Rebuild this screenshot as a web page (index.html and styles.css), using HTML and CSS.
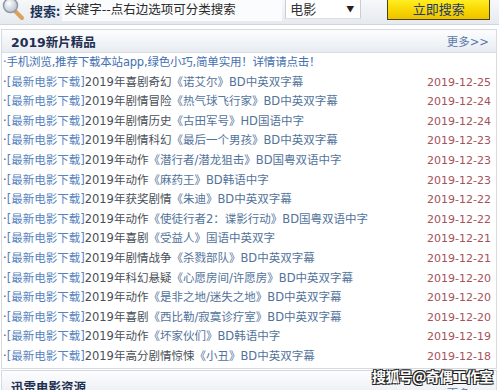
FILE: index.html
```html
<!DOCTYPE html>
<html lang="zh">
<head>
<meta charset="utf-8">
<title>2019新片精品</title>
<link rel="stylesheet" href="styles.css">
</head>
<body>
<div class="topbar">
  <svg class="lens" width="24" height="24" viewBox="0 0 24 24">
    <defs>
      <radialGradient id="g" cx="40%" cy="35%" r="65%">
        <stop offset="0" stop-color="#ffffff"/>
        <stop offset="1" stop-color="#b8c2cc"/>
      </radialGradient>
    </defs>
    <line x1="14" y1="14" x2="21" y2="21" stroke="#d9a25a" stroke-width="4" stroke-linecap="round"/>
    <circle cx="9.5" cy="8.5" r="7" fill="url(#g)" stroke="#8e99a4" stroke-width="1.5"/>
  </svg>
  <span class="label">搜索:</span>
  <div class="input">关键字--点右边选项可分类搜索</div>
  <div class="select"><span>电影</span><span class="arrow">▼</span></div>
  <div class="btn">立即搜索</div>
</div>

<div class="panel">
  <div class="head"><h2>2019新片精品</h2><a class="more">更多&gt;&gt;</a></div>
  <ul class="list">
    <li class="notice">·手机浏览,推荐下载本站app,绿色小巧,简单实用！详情请点击！</li>
    <li><span class="t">·<i>[最新电影下载]</i>2019年喜剧奇幻<b>《诺艾尔》BD中英双字幕</b></span><span class="d">2019-12-25</span></li>
    <li><span class="t">·<i>[最新电影下载]</i>2019年剧情冒险<b>《热气球飞行家》BD中英双字幕</b></span><span class="d">2019-12-24</span></li>
    <li><span class="t">·<i>[最新电影下载]</i>2019年剧情历史<b>《古田军号》HD国语中字</b></span><span class="d">2019-12-24</span></li>
    <li><span class="t">·<i>[最新电影下载]</i>2019年剧情科幻<b>《最后一个男孩》BD中英双字幕</b></span><span class="d">2019-12-23</span></li>
    <li><span class="t">·<i>[最新电影下载]</i>2019年动作<b>《潜行者/潜龙狙击》BD国粤双语中字</b></span><span class="d">2019-12-23</span></li>
    <li><span class="t">·<i>[最新电影下载]</i>2019年动作<b>《麻药王》BD韩语中字</b></span><span class="d">2019-12-23</span></li>
    <li><span class="t">·<i>[最新电影下载]</i>2019年获奖剧情<b>《朱迪》BD中英双字幕</b></span><span class="d">2019-12-22</span></li>
    <li><span class="t">·<i>[最新电影下载]</i>2019年动作<b>《使徒行者2：谍影行动》BD国粤双语中字</b></span><span class="d">2019-12-22</span></li>
    <li><span class="t">·<i>[最新电影下载]</i>2019年喜剧<b>《受益人》国语中英双字</b></span><span class="d">2019-12-21</span></li>
    <li><span class="t">·<i>[最新电影下载]</i>2019年剧情战争<b>《杀戮部队》BD中英双字幕</b></span><span class="d">2019-12-21</span></li>
    <li><span class="t">·<i>[最新电影下载]</i>2019年科幻悬疑<b>《心愿房间/许愿房》BD中英双字幕</b></span><span class="d">2019-12-20</span></li>
    <li><span class="t">·<i>[最新电影下载]</i>2019年动作<b>《是非之地/迷失之地》BD中英双字幕</b></span><span class="d">2019-12-20</span></li>
    <li><span class="t">·<i>[最新电影下载]</i>2019年喜剧<b>《西比勒/寂寞诊疗室》BD中英双字幕</b></span><span class="d">2019-12-20</span></li>
    <li><span class="t">·<i>[最新电影下载]</i>2019年动作<b>《坏家伙们》BD韩语中字</b></span><span class="d">2019-12-19</span></li>
    <li><span class="t">·<i>[最新电影下载]</i>2019年高分剧情惊悚<b>《小丑》BD中英双字幕</b></span><span class="d">2019-12-18</span></li>
  </ul>
</div>

<div class="panel panel2">
  <div class="head"><h2>迅雷电影资源</h2><a class="more">更多&gt;&gt;</a></div>
</div>

<div class="watermark">搜狐号@奇偶工作室</div>
</body>
</html>
```

FILE: styles.css
```css
html, body {
  margin: 0;
  padding: 0;
  background: #ffffff;
  overflow: hidden;
}
body {
  width: 499px;
  height: 390px;
  position: relative;
  font-family: "DejaVu Sans", "Noto Sans CJK SC", sans-serif;
  font-size: 11.5px;
}
.topbar {
  height: 25px;
  display: flex;
  align-items: flex-start;
  background: linear-gradient(#f6f8fa, #e6eaef);
  border-bottom: 1px solid #cfd5dc;
  box-sizing: border-box;
  position: relative;
}
.lens {
  margin: -3px 0 0 1px;
  flex: none;
}
.label {
  margin: 3px 0 0 5px;
  font-weight: bold;
  font-size: 13px;
  color: #1d3358;
  font-family: "Noto Sans CJK SC", sans-serif;
  line-height: 16px;
}
.input {
  margin: 0 0 0 2px;
  width: 220px;
  height: 21px;
  background: #fbfcfd;
  color: #2a2a2a;
  font-size: 12.5px;
  line-height: 19px;
  padding-left: 2px;
  font-family: "DejaVu Sans", "Noto Sans CJK SC", sans-serif;
  box-sizing: border-box;
}
.select {
  margin-left: 3px;
  width: 76px;
  height: 19px;
  background: #fff;
  border-left: 1px solid #c9ced6;
  border-right: 1px solid #c9ced6;
  border-bottom: 1px solid #dde1e6;
  box-sizing: border-box;
  display: flex;
  justify-content: space-between;
  align-items: center;
  padding: 0 6px 2px 4px;
  font-size: 13px;
  color: #333;
  font-family: "Noto Sans CJK SC", sans-serif;
}
.select .arrow {
  font-size: 8px;
  color: #222;
}
.btn {
  margin-left: 26px;
  width: 103px;
  height: 20px;
  box-sizing: border-box;
  border: 1px solid #4b4220;
  border-top: none;
  background: linear-gradient(#ffee22, #f7d300 60%, #eec200);
  color: #1d3a70;
  font-size: 13px;
  font-family: "Noto Sans CJK SC", sans-serif;
  text-align: center;
  line-height: 18px;
}
.panel {
  margin: 4px 2px 0 1px;
  border: 1px solid #d5dae1;
  border-top: none;
}
.head {
  height: 24px;
  box-sizing: border-box;
  border-top: 1px solid #d3d9e0;
  border-bottom: 1px solid #d8dde4;
  background: linear-gradient(#fdfdfe, #eef1f5 70%, #e8ecf0);
  display: flex;
  align-items: center;
  justify-content: space-between;
  padding: 0 7px 0 9px;
}
.head h2 {
  margin: 0;
  font-size: 12.5px;
  font-weight: bold;
  color: #1e2f50;
  font-family: "DejaVu Sans", "Noto Sans CJK SC", sans-serif;
}
.more {
  color: #5a7aa8;
  font-size: 11.5px;
  font-family: "DejaVu Sans", "Noto Sans CJK SC", sans-serif;
}
.list {
  list-style: none;
  margin: 0;
  padding: 0 5px 1px 1px;
}
.list li {
  height: 19.6px;
  line-height: 19.6px;
  display: flex;
  justify-content: space-between;
  white-space: nowrap;
  color: #4a5058;
}
.list li.notice {
  color: #4470b0;
  letter-spacing: -0.2px;
}
.list i {
  font-style: normal;
  color: #5583c0;
}
.list b {
  font-weight: normal;
  color: #52739a;
}
.list .d {
  color: #a65258;
  font-size: 11px;
}
.panel2 {
  margin-top: 1px;
  border-bottom: none;
}
.panel2 .head {
  height: 30px;
  align-items: flex-start;
  padding-top: 6px;
}
.panel2 .more {
  margin-top: 8px;
}
.watermark {
  position: absolute;
  left: 372px;
  top: 366px;
  font-size: 14px;
  font-weight: bold;
  color: #ffffff;
  font-family: "Noto Sans CJK SC", sans-serif;
  text-shadow: 1px 1px 0 #222, -1px -1px 0 #222, 1px -1px 0 #222, -1px 1px 0 #222;
  letter-spacing: -0.6px;
  white-space: nowrap;
}
```
